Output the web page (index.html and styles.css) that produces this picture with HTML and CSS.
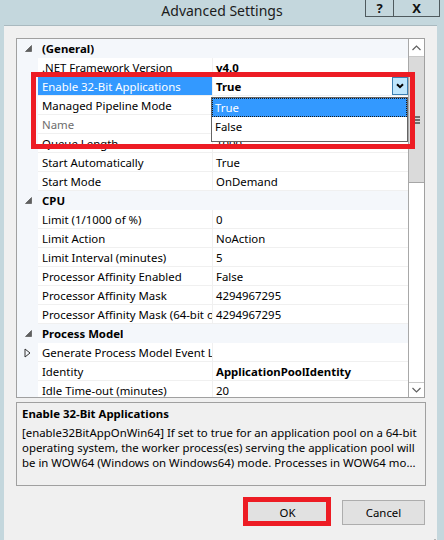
FILE: index.html
```html
<!DOCTYPE html>
<html lang="en">
<head>
<meta charset="utf-8">
<title>Advanced Settings</title>
<link rel="stylesheet" href="styles.css">
</head>
<body>
<div class="frame">
  <header class="titlebar">
    <div class="title">Advanced Settings</div>
    <div class="caption-buttons">
      <span class="cap cap-help">?</span>
      <span class="cap cap-close">X</span>
    </div>
  </header>

  <main class="window">
    <section class="grid">
      <div class="rows">
        <div class="row cat">
          <span class="gutter"><svg class="cat-glyph" width="7" height="7" viewBox="0 0 7 7"><polygon points="6.5,0.5 6.5,6.5 0.5,6.5" fill="#5f5f5f" stroke="#5f5f5f" stroke-width="0.8"/></svg></span>
          <span class="label">(General)</span>
        </div>
        <div class="row"><span class="gutter"></span><span class="label">.NET Framework Version</span><span class="value strong">v4.0</span></div>
        <div class="row selected"><span class="gutter"></span><span class="label">Enable 32-Bit Applications</span><span class="value editing"><span class="strong">True</span><span class="combo-btn"><svg width="8" height="6" viewBox="0 0 8 6"><path d="M1 1.2 L4 4.2 L7 1.2" fill="none" stroke="#000" stroke-width="2"/></svg></span></span></div>
        <div class="row"><span class="gutter"></span><span class="label">Managed Pipeline Mode</span><span class="value">Integrated</span></div>
        <div class="row"><span class="gutter"></span><span class="label readonly">Name</span><span class="value">DefaultAppPool</span></div>
        <div class="row"><span class="gutter"></span><span class="label">Queue Length</span><span class="value">1000</span></div>
        <div class="row"><span class="gutter"></span><span class="label">Start Automatically</span><span class="value">True</span></div>
        <div class="row"><span class="gutter"></span><span class="label">Start Mode</span><span class="value">OnDemand</span></div>
        <div class="row cat">
          <span class="gutter"><svg class="cat-glyph" width="7" height="7" viewBox="0 0 7 7"><polygon points="6.5,0.5 6.5,6.5 0.5,6.5" fill="#5f5f5f" stroke="#5f5f5f" stroke-width="0.8"/></svg></span>
          <span class="label">CPU</span>
        </div>
        <div class="row"><span class="gutter"></span><span class="label">Limit (1/1000 of %)</span><span class="value">0</span></div>
        <div class="row"><span class="gutter"></span><span class="label">Limit Action</span><span class="value">NoAction</span></div>
        <div class="row"><span class="gutter"></span><span class="label">Limit Interval (minutes)</span><span class="value">5</span></div>
        <div class="row"><span class="gutter"></span><span class="label">Processor Affinity Enabled</span><span class="value">False</span></div>
        <div class="row"><span class="gutter"></span><span class="label">Processor Affinity Mask</span><span class="value">4294967295</span></div>
        <div class="row"><span class="gutter"></span><span class="label">Processor Affinity Mask (64-bit option)</span><span class="value">4294967295</span></div>
        <div class="row cat">
          <span class="gutter"><svg class="cat-glyph" width="7" height="7" viewBox="0 0 7 7"><polygon points="6.5,0.5 6.5,6.5 0.5,6.5" fill="#5f5f5f" stroke="#5f5f5f" stroke-width="0.8"/></svg></span>
          <span class="label">Process Model</span>
        </div>
        <div class="row"><span class="gutter"><svg width="7" height="10" viewBox="0 0 7 10"><polygon points="1,1 6,5 1,9" fill="none" stroke="#333" stroke-width="1"/></svg></span><span class="label">Generate Process Model Event Log Entry</span><span class="value"></span></div>
        <div class="row"><span class="gutter"></span><span class="label">Identity</span><span class="value strong">ApplicationPoolIdentity</span></div>
        <div class="row"><span class="gutter"></span><span class="label">Idle Time-out (minutes)</span><span class="value">20</span></div>
      </div>
      <div class="scrollbar">
        <span class="sb-btn sb-up"><svg width="9" height="6" viewBox="0 0 9 6"><path d="M0.5 5 L4.5 1 L8.5 5" fill="none" stroke="#606060" stroke-width="1.2"/></svg></span>
        <span class="sb-thumb"><svg width="7" height="8" viewBox="0 0 7 8"><rect x="0" y="0" width="7" height="2" fill="#6e6e6e"/><rect x="0" y="3" width="7" height="2" fill="#6e6e6e"/><rect x="0" y="6" width="7" height="2" fill="#6e6e6e"/></svg></span>
        <span class="sb-track"></span>
        <span class="sb-btn sb-down"><svg width="9" height="6" viewBox="0 0 9 6"><path d="M0.5 1 L4.5 5 L8.5 1" fill="none" stroke="#606060" stroke-width="1.2"/></svg></span>
      </div>
    </section>

    <section class="desc">
      <div class="desc-title">Enable 32-Bit Applications</div>
      <div class="desc-line">[enable32BitAppOnWin64] If set to true for an application pool on a 64-bit</div>
      <div class="desc-line">operating system, the worker process(es) serving the application pool will</div>
      <div class="desc-line">be in WOW64 (Windows on Windows64) mode. Processes in WOW64 mo...</div>
    </section>

    <footer class="buttons">
      <button class="btn">OK</button>
      <button class="btn">Cancel</button>
    </footer>

    <svg class="grip" width="9" height="9" viewBox="0 0 9 9">
      <rect x="7" y="1" width="2" height="2" fill="#b4b4b4"/>
      <rect x="7" y="4" width="2" height="2" fill="#b4b4b4"/>
      <rect x="4" y="4" width="2" height="2" fill="#b4b4b4"/>
      <rect x="7" y="7" width="2" height="2" fill="#b4b4b4"/>
      <rect x="4" y="7" width="2" height="2" fill="#b4b4b4"/>
      <rect x="1" y="7" width="2" height="2" fill="#b4b4b4"/>
    </svg>
  </main>

  <div class="dropdown">
    <div class="dd-item dd-active">True</div>
    <div class="dd-item">False</div>
  </div>

  <div class="mark mark-prop"></div>
  <div class="mark mark-ok"></div>
</div>
</body>
</html>
```

FILE: styles.css
```css
html, body {
  margin: 0;
  padding: 0;
  width: 444px;
  height: 540px;
  overflow: hidden;
}

body {
  background: #c4d7dd;
  font-family: "Noto Sans", "DejaVu Sans", sans-serif;
  font-size: 11.4px;
  color: #000;
}

.frame {
  position: relative;
  width: 444px;
  height: 540px;
}

/* ---------- title bar ---------- */
.titlebar {
  height: 25px;
  display: grid;
  grid-template-columns: 1fr auto 1fr;
  align-items: start;
}

.title {
  grid-column: 2;
  font-size: 14px;
  line-height: 22px;
  color: #1b1b1b;
}

.caption-buttons {
  grid-column: 3;
  justify-self: end;
  display: flex;
  margin-right: 4px;
}

.cap {
  height: 16px;
  border: 1px solid #4f5a5e;
  border-top: none;
  display: flex;
  align-items: center;
  justify-content: center;
  font-weight: bold;
  font-size: 13px;
  color: #111;
  box-sizing: content-box;
}

.cap-help {
  width: 27px;
}

.cap-close {
  width: 45px;
  border-left: none;
}

/* ---------- window ---------- */
.window {
  position: relative;
  margin: 0 7px 0 4px;
  height: 510px;
  background: #f0f0f0;
  border-top: 1px solid #a9b9bf;
  padding: 12px 12px 0 12px;
}

/* ---------- property grid ---------- */
.grid {
  display: flex;
  width: 409px;
  height: 360px;
  box-sizing: border-box;
  border: 1px solid #a0a0a0;
  background: #fff;
  overflow: hidden;
}

.rows {
  width: 391px;
  flex: none;
  overflow: hidden;
}

.row {
  display: flex;
  height: 19px;
  line-height: 18px;
}

.gutter {
  width: 21px;
  flex: none;
  background: #f4f7fb;
  display: flex;
  align-items: center;
  justify-content: center;
}

.label,
.value {
  height: 19px;
  box-sizing: border-box;
  padding-top: 1px;
  border-bottom: 1px solid #f0f0f0;
  white-space: nowrap;
  overflow: hidden;
}

.label {
  width: 175px;
  flex: none;
  padding-left: 4px;
  border-right: 1px solid #f0f0f0;
}

.value {
  flex: 1;
  padding-left: 3px;
}

.strong {
  font-weight: bold;
}

.readonly {
  color: #6d6d6d;
}

.row.cat {
  background: #f4f7fb;
  font-weight: bold;
}

.row.cat .label {
  width: auto;
  border: none;
}

.cat-glyph {
  margin-left: 2px;
}

.row.selected .label {
  background: #3399ff;
  color: #fff;
}

.value.editing {
  display: flex;
  justify-content: space-between;
  align-items: flex-start;
  padding-top: 0;
}

.value.editing .strong {
  padding-top: 1px;
}

.combo-btn {
  width: 16px;
  height: 18px;
  box-sizing: border-box;
  border: 1px solid #3c7fb1;
  background: #bee6fd;
  display: flex;
  align-items: center;
  justify-content: center;
}

/* ---------- scrollbar ---------- */
.scrollbar {
  width: 16px;
  flex: none;
  box-sizing: border-box;
  border-left: 1px solid #a8a8a8;
  display: flex;
  flex-direction: column;
}

.sb-btn {
  display: flex;
  align-items: center;
  justify-content: center;
  background: #fff;
}

.sb-up {
  height: 17px;
  border-bottom: 1px solid #c8c8c8;
}

.sb-thumb {
  height: 125px;
  background: #dadada;
  border-bottom: 1px solid #a6a6a6;
  display: flex;
  align-items: center;
  justify-content: center;
}

.sb-track {
  flex: 1;
  background: #fff;
}

.sb-down {
  height: 14px;
  border-top: 1px solid #c8c8c8;
}

/* ---------- description ---------- */
.desc {
  margin-top: 4px;
  width: 410px;
  height: 84px;
  box-sizing: border-box;
  border: 1px solid #a0a0a0;
  padding: 3px 5px;
  line-height: 15px;
}

.desc-title {
  font-weight: bold;
  margin-bottom: 4px;
}

.desc-line {
  white-space: nowrap;
  overflow: hidden;
}

/* ---------- buttons ---------- */
.buttons {
  display: flex;
  justify-content: flex-end;
  gap: 13px;
  margin-top: 14px;
}

.btn {
  width: 83px;
  height: 25px;
  box-sizing: border-box;
  border: 1px solid #adadad;
  background: #e1e1e1;
  font-family: inherit;
  font-size: 11.4px;
  color: #000;
  padding: 0;
}

.grip {
  position: absolute;
  right: 1px;
  bottom: 1px;
}

/* ---------- open combo list (overlay) ---------- */
.dropdown {
  position: absolute;
  left: 211px;
  top: 97px;
  width: 197px;
  height: 45px;
  box-sizing: border-box;
  border: 1px solid #646464;
  background: #fff;
  line-height: 17px;
}

.dd-item {
  height: 19px;
  padding-left: 2px;
  box-sizing: border-box;
  border: 1px solid transparent;
  line-height: 17px;
}

.dd-active {
  background: #3399ff;
  color: #fff;
  border: 1px dotted #1a1a1a;
}

/* ---------- red annotation rectangles (overlay) ---------- */
.mark {
  position: absolute;
  box-sizing: border-box;
  border: 5px solid #ed1c24;
}

.mark-prop {
  left: 31px;
  top: 72px;
  width: 384px;
  height: 77px;
}

.mark-ok {
  left: 243px;
  top: 497px;
  width: 88px;
  height: 29px;
}
```
